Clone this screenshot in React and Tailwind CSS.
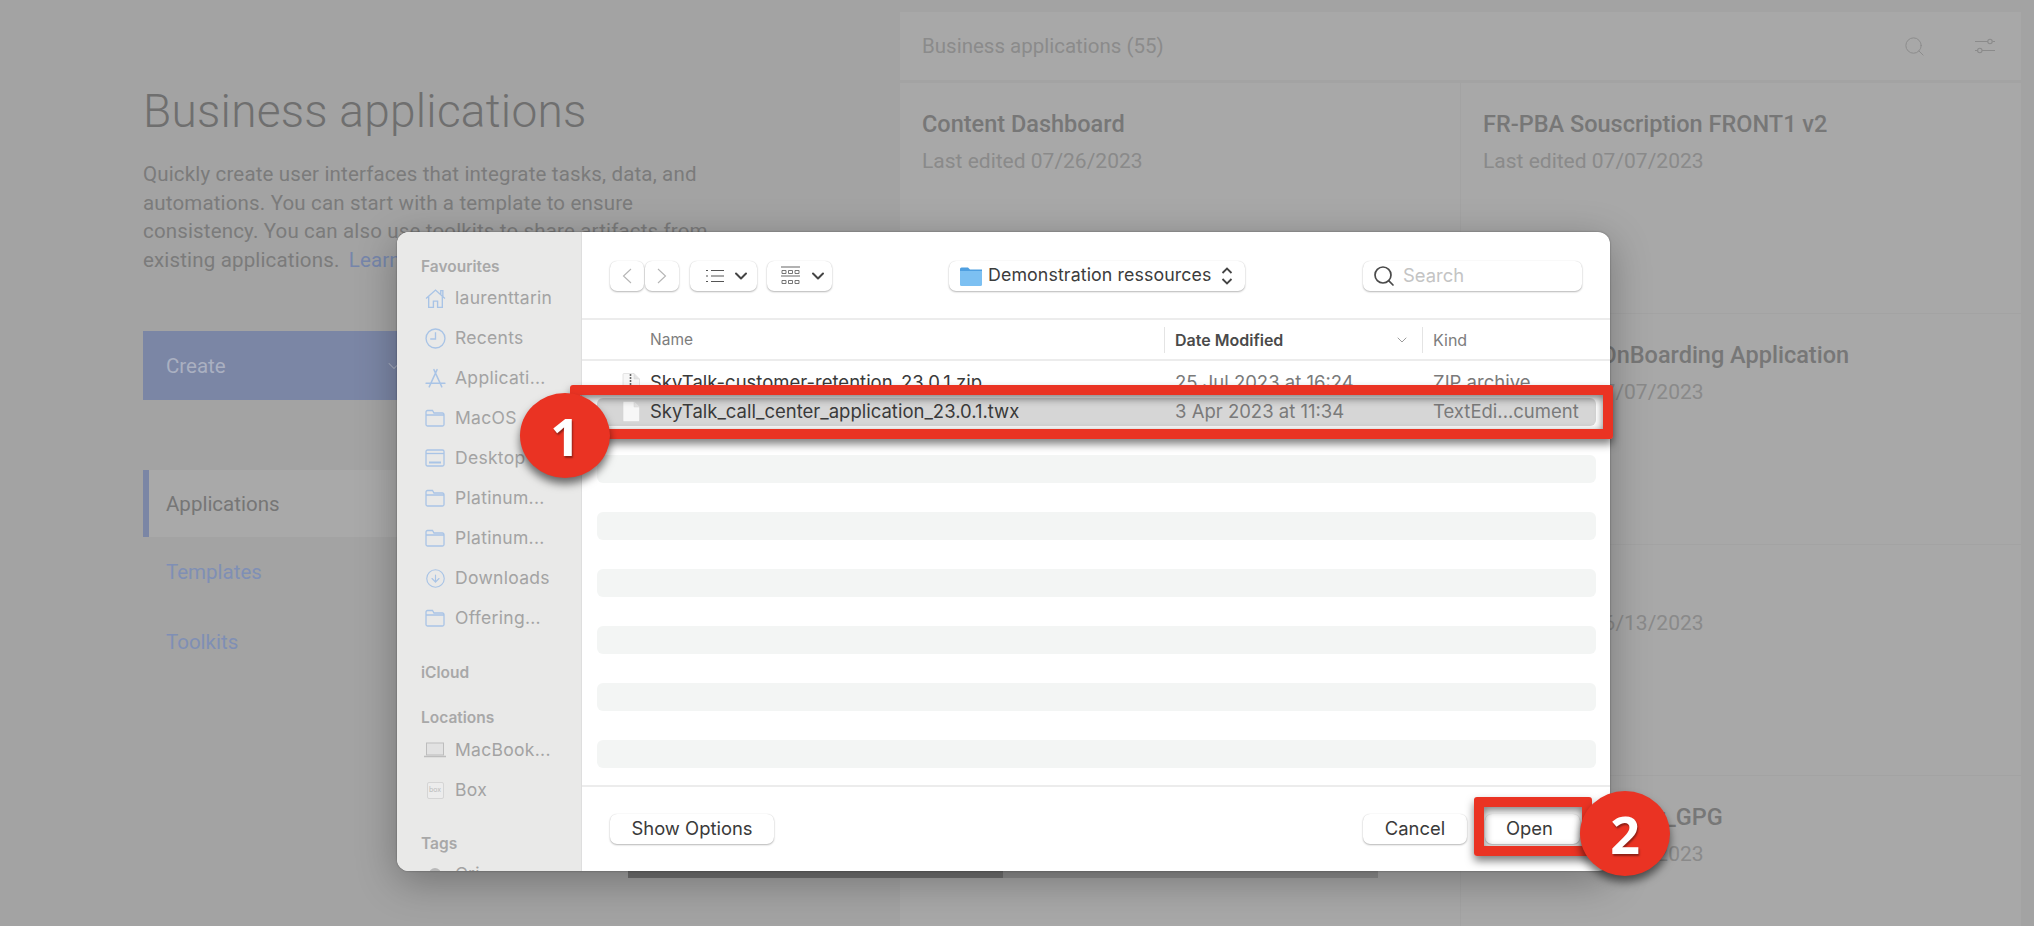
import React from 'react'
import { ChevronDown, CircleArrowDown, Search } from 'lucide-react'

const sidebarIconCls = 'w-[21px] h-[21px] text-[#a9c4e6] shrink-0'

const FolderIcon = () => (
  <svg viewBox="0 0 20 18" className="w-[20px] h-[18px] text-[#a9c4e6]" fill="none" stroke="currentColor" strokeWidth="1.3">
    <path d="M1 4V15.5a1.5 1.5 0 0 0 1.5 1.5h15a1.5 1.5 0 0 0 1.5-1.5V5.5A1.5 1.5 0 0 0 17.5 4H9L7.5 1.5H2.5A1.5 1.5 0 0 0 1 3V6h18" />
  </svg>
)

const HomeIcon = () => (
  <svg viewBox="0 0 20 20" className={sidebarIconCls} fill="none" stroke="currentColor" strokeWidth="1.3">
    <path d="M1 10L10 2L19 10M15 6V2.5H17V8M3.5 8V18.5H8V12.5H12V18.5H16.5V8" />
  </svg>
)

const ClockIcon = () => (
  <svg viewBox="0 0 20 20" className={sidebarIconCls} fill="none" stroke="currentColor" strokeWidth="1.3">
    <circle cx="10" cy="10" r="9" />
    <path d="M10 4V10.5H5" />
  </svg>
)

const AppsIcon = () => (
  <svg viewBox="0 0 20 20" className={sidebarIconCls} fill="none" stroke="currentColor" strokeWidth="1.4" strokeLinecap="round">
    <path d="M8.5 1.5L16 18M11.5 1.5L4 18M1 14.5H19" />
  </svg>
)

const DesktopIcon = () => (
  <svg viewBox="0 0 20 18" className="w-[20px] h-[18px] text-[#a9c4e6]" fill="none" stroke="currentColor" strokeWidth="1.3">
    <rect x="1" y="1" width="18" height="16" rx="1.5" />
    <path d="M1 4.5H19" />
    <path d="M4 13.5H16" strokeWidth="2" />
  </svg>
)

const LaptopIcon = () => (
  <svg viewBox="0 0 24 16" className="w-[24px] h-[16px]">
    <rect x="3.5" y="1" width="17" height="12" fill="#e2e2e2" stroke="#bdbdbd" />
    <path d="M1 14.5H23" stroke="#bdbdbd" strokeWidth="1.5" />
  </svg>
)

const BoxIcon = () => (
  <div className="w-[17px] h-[17px] border border-[#d5d5d5] rounded-[2px] bg-[#ececec] flex items-center justify-center text-[7px] text-[#bbbbbb]">box</div>
)

const TagDot = () => <div className="w-[12px] h-[12px] rounded-full bg-[#b9b9b9]" />

const FileIcon = ({ zip }) => (
  <svg viewBox="0 0 18 21" className="w-[18px] h-[21px] shrink-0">
    <path d="M1 1.5A1 1 0 0 1 2 .5H12L17.5 6V19.5a1 1 0 0 1-1 1H2a1 1 0 0 1-1-1Z" fill="#f7f7f7" stroke="#d5d5d5" strokeWidth="0.6" />
    <path d="M12 .5V6H17.5" fill="#e4e4e4" stroke="#d5d5d5" strokeWidth="0.5" />
    {zip && <path d="M8.5 1V14" stroke="#666666" strokeWidth="1.6" strokeDasharray="2 1" />}
  </svg>
)

const favourites = [
  { label: 'laurenttarin', icon: <HomeIcon /> },
  { label: 'Recents', icon: <ClockIcon /> },
  { label: 'Applicati...', icon: <AppsIcon /> },
  { label: 'MacOS', icon: <FolderIcon /> },
  { label: 'Desktop', icon: <DesktopIcon /> },
  { label: 'Platinum...', icon: <FolderIcon /> },
  { label: 'Platinum...', icon: <FolderIcon /> },
  { label: 'Downloads', icon: <CircleArrowDown className={sidebarIconCls} strokeWidth={1.3} /> },
  { label: 'Offering...', icon: <FolderIcon /> },
]

const locations = [
  { label: 'MacBook...', icon: <LaptopIcon /> },
  { label: 'Box', icon: <BoxIcon /> },
]

const cards = [
  { title: 'Content Dashboard', date: '07/26/2023' },
  { title: 'FR-PBA Souscription FRONT1 v2', date: '07/07/2023' },
  { title: 'Retention Portal', date: '07/07/2023' },
  { title: 'Contractor OnBoarding Application', date: '07/07/2023' },
  { title: 'Sales Desk', date: '06/13/2023' },
  { title: 'Claims', date: '06/13/2023' },
  { title: 'Service Hub', date: '06/13/2023' },
  { title: 'Hiring Request Fr_GPG', date: '06/13/2023' },
]

const SideHeading = ({ children, className }) => (
  <div className={`h-[20px] pl-[24px] flex items-center text-[15.5px] font-semibold text-[#a8a8a8] ${className || ''}`}>{children}</div>
)

const SideItem = ({ icon, label }) => (
  <div className="h-[40px] flex items-center">
    <div className="w-[58px] pl-[26px] pr-[8px] flex justify-center shrink-0">{icon}</div>
    <span className="text-[17.5px] text-[#a3a3a3] tracking-[0.3px]">{label}</span>
  </div>
)

const ToolButton = ({ className, children }) => (
  <div className={`h-[30px] bg-white rounded-[7px] shadow-[0_1px_2px_rgba(0,0,0,0.28),0_0_1px_rgba(0,0,0,0.15)] flex items-center ${className}`}>
    {children}
  </div>
)

const FileRow = ({ name, date, kind, zip, selected, striped }) => (
  <div className={`h-[28.5px] flex items-center rounded-[6px] text-[18.5px] ${selected ? 'bg-[#d6d6d6]' : striped ? 'bg-[#f3f5f4]' : ''}`}>
    {name && (
      <>
        <div className="w-[578px] pl-[25px] flex items-center gap-[10px] text-[#3a3a3a]">
          <FileIcon zip={zip} />
          <span>{name}</span>
        </div>
        <div className="w-[258px] text-[#7a7a7a]">{date}</div>
        <div className="text-[#7a7a7a]">{kind}</div>
      </>
    )}
  </div>
)

const Badge = ({ n, className }) => (
  <div className={`absolute w-[90px] h-[85px] rounded-[50%] bg-[#ea3323] shadow-[0_6px_9px_rgba(0,0,0,0.55)] flex items-center justify-center text-white text-[52px] font-bold [text-shadow:1px_2px_2px_rgba(0,0,0,0.4)] font-['Open_Sans',sans-serif] ${className}`}>
    {n}
  </div>
)

const rows = Array.from({ length: 14 })

export default function App() {
  return (
    <div className="relative w-[2034px] h-[926px] overflow-hidden bg-[#a3a3a3] flex font-['Inter',sans-serif]">
      {/* page behind the dialog */}
      <div className="w-[900px] shrink-0 pl-[143px] pt-[85px] font-['Roboto',sans-serif]">
        <h1 className="text-[46px] leading-[52px] font-light tracking-[0.25px] text-[#6f6f6f]">Business applications</h1>
        <p className="mt-[23px] w-[580px] text-[20.5px] leading-[28.6px] tracking-[0.16px] text-[#7b7b7b]">
          Quickly create user interfaces that integrate tasks, data, and automations. You can start with a template to ensure consistency. You can also use toolkits to share artifacts from existing applications.{' '}
          <span className="text-[#7686ab] ml-[4px]">Learn more</span>
        </p>
        <div className="mt-[57px] w-[350px] h-[69px] bg-[#7b86a5] pl-[23px] pr-[14px] flex items-center justify-between text-[20.5px] text-[#aab0c1]">
          <span>Create</span>
          <ChevronDown className="w-[20px] h-[20px] mr-[75px]" strokeWidth={1.25} />
        </div>
        <nav className="mt-[70px] text-[20.5px]">
          <div className="h-[67px] w-[300px] bg-[#a9a9a9] border-l-[6px] border-[#7b86a5] pl-[17px] flex items-center text-[#767676]">Applications</div>
          <div className="h-[70px] pl-[23px] flex items-center text-[#7f8fb5]">Templates</div>
          <div className="h-[70px] pl-[23px] flex items-center text-[#7f8fb5]">Toolkits</div>
        </nav>
      </div>

      <div className="w-[1121px] pt-[12px] font-['Roboto',sans-serif]">
        <div className="h-[68px] bg-[#a8a8a8] pl-[22px] pr-[25px] flex items-center justify-between text-[#8b8b8b]">
          <span className="text-[20.5px]">Business applications (55)</span>
          <div className="flex items-center gap-[48px]">
            <Search className="w-[23px] h-[23px]" strokeWidth={1} />
            <svg viewBox="0 0 22 20" className="w-[22px] h-[20px]" fill="none" stroke="currentColor" strokeWidth="1.1">
              <path d="M1 5.5H14M18.5 5.5H21M1 14.5H3.5M8 14.5H21" />
              <circle cx="16" cy="5.5" r="2.2" />
              <circle cx="5.8" cy="14.5" r="2.2" />
            </svg>
          </div>
        </div>
        <div className="mt-[3px] grid grid-cols-2 gap-[1px] auto-rows-[230px]">
          {cards.map(card => (
            <div key={card.title} className="bg-[#a8a8a8] pl-[22px] pt-[27px]">
              <div className="text-[23.5px] leading-[28px] font-medium text-[#777777]">{card.title}</div>
              <div className="mt-[11px] text-[21px] leading-[24px] text-[#8a8a8a]">Last edited {card.date}</div>
            </div>
          ))}
        </div>
      </div>

      {/* scrollbar peeking out below the dialog */}
      <div className="absolute left-[628px] top-[866px] h-[12px] w-[750px] flex">
        <div className="w-[375px] bg-[#707070]" />
        <div className="w-[375px] bg-[#8e8e8e]" />
      </div>

      {/* file dialog */}
      <div className="absolute left-[397px] top-[232px] w-[1213px] h-[639px] rounded-[12px] overflow-hidden bg-white flex shadow-[0_0_2px_rgba(0,0,0,0.4),0_10px_40px_rgba(0,0,0,0.3)]">
        <aside className="w-[185px] shrink-0 bg-[#e9e9e8] pt-[25px] border-r border-[#dedede] overflow-hidden">
          <SideHeading>Favourites</SideHeading>
          <div className="mt-[1px]">
            {favourites.map((item, i) => <SideItem key={i} {...item} />)}
          </div>
          <SideHeading className="mt-[25px]">iCloud</SideHeading>
          <SideHeading className="mt-[25px]">Locations</SideHeading>
          <div className="mt-[2px]">
            {locations.map(item => <SideItem key={item.label} {...item} />)}
          </div>
          <SideHeading className="mt-[24px]">Tags</SideHeading>
          <SideItem icon={<TagDot />} label="Cri..." />
        </aside>

        <main className="flex-1 flex flex-col">
          <div className="h-[88px] shrink-0 pl-[28px] pt-[1px] flex items-center border-b-2 border-[#ececec]">
            <ToolButton className="w-[34px] justify-center">
              <svg viewBox="0 0 10 16" className="w-[10px] h-[16px] text-[#b5b5b5]" fill="none" stroke="currentColor" strokeWidth="1.1"><path d="M9 1L1.5 8L9 15" /></svg>
            </ToolButton>
            <ToolButton className="w-[34px] ml-[1px] justify-center">
              <svg viewBox="0 0 10 16" className="w-[10px] h-[16px] text-[#b5b5b5]" fill="none" stroke="currentColor" strokeWidth="1.1"><path d="M1 1L8.5 8L1 15" /></svg>
            </ToolButton>
            <ToolButton className="w-[67px] ml-[11px] pl-[16px] gap-[7px]">
              <svg viewBox="0 0 18 14" className="w-[18px] h-[14px] text-[#555555]" stroke="currentColor" strokeWidth="1.2" fill="none">
                <path d="M5 1.5H18M5 7H18M5 12.5H18M0 1.5H2M0 7H2M0 12.5H2" />
              </svg>
              <ChevronDown className="w-[20px] h-[20px] text-[#444444]" strokeWidth={2.4} />
            </ToolButton>
            <ToolButton className="w-[65px] ml-[10px] pl-[14px] gap-[8px]">
              <svg viewBox="0 0 19 20" className="w-[19px] h-[20px] text-[#666666]" stroke="currentColor" fill="none">
                <path d="M0 1H19M0 10H19" strokeWidth="1.2" />
                <path d="M1 4.5h4v3H1zM7.5 4.5h4v3h-4zM14 4.5h4v3h-4zM1 14.5h4v3H1zM7.5 14.5h4v3h-4zM14 14.5h4v3h-4z" strokeWidth="0.9" />
              </svg>
              <ChevronDown className="w-[20px] h-[20px] text-[#444444]" strokeWidth={2.4} />
            </ToolButton>
            <ToolButton className="w-[296px] ml-[117px] pl-[11px]">
              <svg viewBox="0 0 22 20" className="w-[22px] h-[20px] shrink-0">
                <path d="M0 3A1.5 1.5 0 0 1 1.5 1.5H8L10 3.5H22V6H0Z" fill="#4f9fe0" />
                <path d="M0 5H22V18.5A1.5 1.5 0 0 1 20.5 20H1.5A1.5 1.5 0 0 1 0 18.5Z" fill="#7cc0f2" />
              </svg>
              <span className="ml-[6px] text-[17.8px] text-[#3c3c3c] tracking-[0.1px] whitespace-nowrap">Demonstration ressources</span>
              <svg viewBox="0 0 12 20" className="ml-[9px] w-[12px] h-[20px] shrink-0 text-[#444444]" fill="none" stroke="currentColor" strokeWidth="1.8">
                <path d="M1.5 7L6 2.5L10.5 7M1.5 13L6 17.5L10.5 13" />
              </svg>
            </ToolButton>
            <ToolButton className="w-[219px] ml-[118px] pl-[9px] gap-[7px]">
              <Search className="w-[24px] h-[24px] text-[#4a4a4a]" strokeWidth={1.7} />
              <span className="text-[18.4px] text-[#c4c4c4]">Search</span>
            </ToolButton>
          </div>

          <div className="h-[41px] shrink-0 flex items-center border-b-2 border-[#ececec]">
            <div className="w-[582px] pl-[68px] text-[15.5px] text-[#7d7d7d]">Name</div>
            <div className="h-[26px] border-l border-[#e4e4e4] w-[258px] pl-[10px] pr-[12px] flex items-center justify-between text-[16px] font-semibold text-[#4a4a4a]">
              Date Modified
              <ChevronDown className="w-[16px] h-[16px] text-[#888888]" strokeWidth={1.25} />
            </div>
            <div className="h-[26px] border-l border-[#e4e4e4] pl-[10px] flex items-center text-[16px] text-[#7d7d7d]">Kind</div>
          </div>

          <div className="flex-1 pt-[8px] pl-[15px] pr-[14px]">
            {rows.map((_, i) => {
              if (i === 0) return <FileRow key={i} zip name="SkyTalk-customer-retention_23.0.1.zip" date="25 Jul 2023 at 16:24" kind="ZIP archive" />
              if (i === 1) return <FileRow key={i} selected name="SkyTalk_call_center_application_23.0.1.twx" date="3 Apr 2023 at 11:34" kind="TextEdi...cument" />
              return <FileRow key={i} striped={i % 2 === 1} />
            })}
          </div>

          <div className="h-[86px] shrink-0 border-t-2 border-[#ececec] pl-[28px] pr-[30px] flex items-center justify-between text-[18.4px] text-[#3a3a3a]">
            <ToolButton className="w-[164px] justify-center">Show Options</ToolButton>
            <div className="flex gap-[18px]">
              <ToolButton className="w-[104px] justify-center">Cancel</ToolButton>
              <ToolButton className="w-[95px] pr-[6px] justify-center">Open</ToolButton>
            </div>
          </div>
        </main>
      </div>

      {/* callouts */}
      <div className="absolute left-[570px] top-[385px] w-[1043px] h-[54px] border-[10px] border-[#ea3323] rounded-[3px] shadow-[0_5px_9px_rgba(0,0,0,0.5),inset_0_3px_8px_rgba(0,0,0,0.55)]" />
      <div className="absolute left-[1474px] top-[797px] w-[118px] h-[59px] border-[10px] border-[#ea3323] rounded-[3px] shadow-[0_5px_9px_rgba(0,0,0,0.5),inset_0_3px_8px_rgba(0,0,0,0.55)]" />
      <Badge n="1" className="left-[520px] top-[393px]" />
      <Badge n="2" className="left-[1580px] top-[791px]" />
    </div>
  )
}
